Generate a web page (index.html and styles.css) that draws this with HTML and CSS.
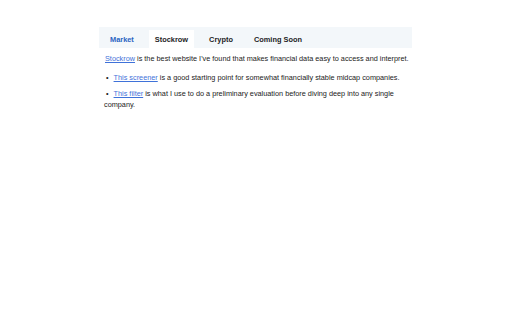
FILE: index.html
```html
<!DOCTYPE html>
<html>
<head>
<meta charset="utf-8">
<link rel="stylesheet" href="styles.css">
</head>
<body>
<div class="wrap">
  <nav class="tabs">
    <span class="tab tab-link">Market</span>
    <span class="tab tab-active">Stockrow</span>
    <span class="tab">Crypto</span>
    <span class="tab">Coming Soon</span>
  </nav>
  <div class="content">
    <p class="intro"><a href="#">Stockrow</a> is the best website I've found that makes financial data easy to access and interpret.</p>
    <ul class="list">
      <li><span class="dot">•</span><a href="#">This screener</a> is a good starting point for somewhat financially stable midcap companies.</li>
      <li><span class="dot">•</span><a href="#">This filter</a> is what I use to do a preliminary evaluation before diving deep into any single company.</li>
    </ul>
  </div>
</div>
</body>
</html>
```
FILE: styles.css
```css
html, body {
  margin: 0;
  padding: 0;
  background: #ffffff;
}
body {
  font-family: "Liberation Sans", Arial, sans-serif;
  color: #222222;
}
.wrap {
  width: 313px;
  margin: 27px 0 0 99px;
}
.tabs {
  display: flex;
  align-items: flex-end;
  gap: 9px;
  height: 21px;
  padding-left: 5px;
  background: #f3f7fa;
  box-sizing: border-box;
}
.tab {
  display: block;
  height: 18px;
  line-height: 20px;
  padding: 0 6px;
  font-size: 7.4px;
  font-weight: bold;
  color: #1d1d1f;
}
.tab-link {
  color: #2a64c2;
}
.tab-active {
  background: #ffffff;
}
.content {
  padding: 6px 0 0 5px;
  font-size: 7.3px;
  line-height: 10.5px;
}
.intro {
  margin: 0;
  padding-left: 1px;
}
a {
  color: #3f72d9;
  text-decoration: underline;
}
.list {
  list-style: none;
  margin: 8.5px 0 0 0;
  padding: 0;
}
.list li {
  margin-bottom: 5.5px;
}
.dot {
  margin-left: 2px;
  margin-right: 5px;
}
```
